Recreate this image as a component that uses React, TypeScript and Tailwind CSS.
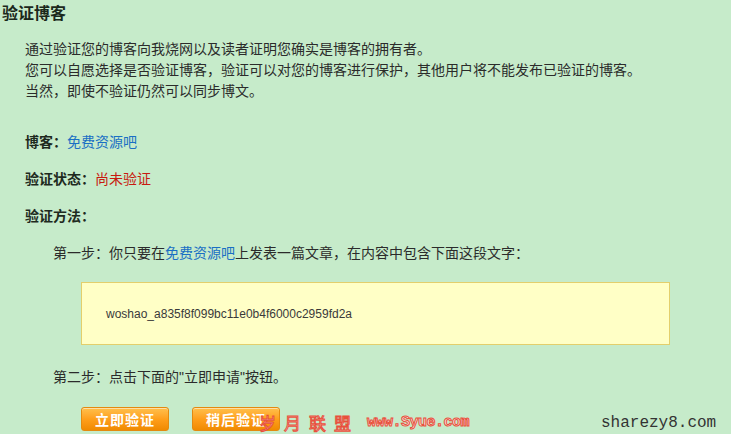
import React from "react";

const cjk = "font-['Noto_Sans_CJK_SC',sans-serif]";

const Label = ({ children }: { children: React.ReactNode }) => (
  <span className="font-bold text-[#1e2a1e]">{children}</span>
);

const OrangeButton = ({ text }: { text: string }) => (
  <button className="w-[88px] h-[24px] rounded-[3px] border border-[#e38a10] bg-gradient-to-b from-[#ffc04a] via-[#ff9f1a] to-[#f08a00] text-white text-[14px] font-bold leading-none tracking-[1px] shadow-[inset_0_1px_0_rgba(255,255,255,0.5)]">
    {text}
  </button>
);

export default function App() {
  return (
    <div
      className={`relative w-[731px] h-[434px] overflow-hidden bg-[#c6ebca] text-[#2b2b2b] ${cjk}`}
    >
      <h1 className="pl-[2px] pt-[1px] h-[24px] text-[16px] leading-[22px] font-bold text-[#1b281b]">
        验证博客
      </h1>

      <div className="pl-[25px] pt-[14px] text-[14px] leading-[21px]">
        <p>通过验证您的博客向我烧网以及读者证明您确实是博客的拥有者。</p>
        <p>您可以自愿选择是否验证博客，验证可以对您的博客进行保护，其他用户将不能发布已验证的博客。</p>
        <p>当然，即使不验证仍然可以同步博文。</p>
      </div>

      <div className="pl-[25px] pt-[30px] text-[14px] leading-[20px] flex flex-col gap-[17px]">
        <div>
          <Label>博客：</Label>
          <span className="text-[#1a6fc4]">免费资源吧</span>
        </div>
        <div>
          <Label>验证状态：</Label>
          <span className="text-[#c81a10]">尚未验证</span>
        </div>
        <div>
          <Label>验证方法：</Label>
        </div>
      </div>

      <div className="pl-[53px] pt-[17px] text-[14px] leading-[20px]">
        第一步：你只要在<span className="text-[#1a6fc4]">免费资源吧</span>上发表一篇文章，在内容中包含下面这段文字：
      </div>

      <div className="ml-[81px] mt-[20px] w-[589px] h-[63px] border border-[#e3cf6c] bg-[#ffffc6] flex items-center pl-[24px] font-['Liberation_Sans',sans-serif] text-[12px] text-[#3a3a3a]">
        woshao_a835f8f099bc11e0b4f6000c2959fd2a
      </div>

      <div className="pl-[53px] pt-[21px] text-[14px] leading-[20px]">
        第二步：点击下面的<span className="font-['Liberation_Sans',sans-serif]">"</span>立即申请<span className="font-['Liberation_Sans',sans-serif]">"</span>按钮。
      </div>

      <div className="pl-[81px] pt-[20px] flex gap-[23px]">
        <OrangeButton text="立即验证" />
        <OrangeButton text="稍后验证" />
      </div>

      {/* watermarks over the page */}
      <div className="absolute left-[259px] top-[413px] flex items-center">
        <span className="text-[17px] leading-[19px] text-[#fbe0dc] [-webkit-text-stroke:1px_#e8503c] tracking-[8px]">
          岁月联盟
        </span>
        <span className="ml-[8px] font-['Liberation_Mono',monospace] font-bold text-[15px] leading-[19px] tracking-[-0.5px] text-[#fbe0dc] [-webkit-text-stroke:1px_#e8503c]">
          www.Syue.com
        </span>
      </div>
      <div className="absolute left-[601px] top-[412px] font-['Liberation_Mono',monospace] text-[16px] leading-[22px] text-[#333]">
        sharezy8.com
      </div>
    </div>
  );
}
